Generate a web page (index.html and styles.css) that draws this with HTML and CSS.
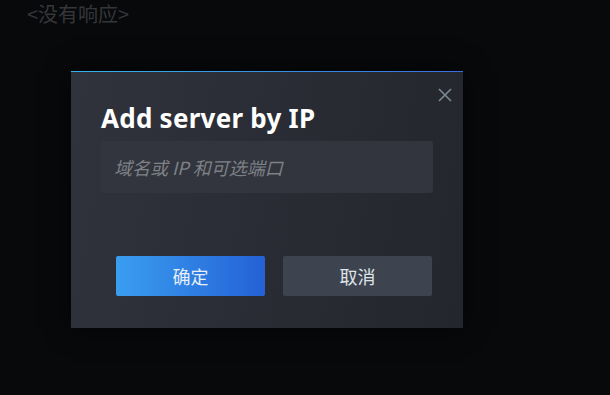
FILE: index.html
```html
<!DOCTYPE html>
<html lang="zh">
<head>
<meta charset="UTF-8" />
<title>Add server by IP</title>
<link rel="stylesheet" href="styles.css">
</head>
<body>
  <div class="status">&lt;没有响应&gt;</div>
  <div class="stage">
    <div class="dialog" role="dialog" aria-labelledby="dlgTitle">
      <button class="close" aria-label="关闭">
        <svg width="14" height="14" viewBox="0 0 14 14"><path d="M1 1 L13 13 M13 1 L1 13" stroke="#7d8a93" stroke-width="1.6" fill="none"/></svg>
      </button>
      <h1 id="dlgTitle">Add server by IP</h1>
      <input class="field" type="text" placeholder="域名或 IP 和可选端口" />
      <div class="btns">
        <button class="btn primary">确定</button>
        <button class="btn">取消</button>
      </div>
    </div>
  </div>
</body>
</html>
```

FILE: styles.css
```css
* { box-sizing: border-box; margin: 0; padding: 0; }
body { background: #08090b; width: 610px; height: 395px; overflow: hidden; font-family: 'Noto Sans', 'Noto Sans CJK SC', sans-serif; }
.status { position: absolute; left: 27px; top: 2px; font-size: 20px; line-height: 24px; color: #34363a; font-family: 'Noto Sans CJK SC', sans-serif; }
.stage { padding: 71px 0 0 71px; }
.dialog {
  position: relative;
  width: 392px;
  height: 257px;
  padding: 29px 30px 0 30px;
  border-top: 1px solid #3aa3e6;
  border-image: linear-gradient(90deg, #33b4ea, #3b6ee0) 1;
  border-left: 0; border-right: 0; border-bottom: 0;
  background: linear-gradient(100deg, #30333b 0%, #2a2d35 45%, #23262d 100%);
  box-shadow: 0 0 24px rgba(0,0,0,0.6);
}
.close { position: absolute; top: 16px; right: 11px; background: none; border: none; width: 14px; height: 14px; display: flex; }
h1 { font-size: 26px; font-weight: 700; color: #ffffff; line-height: 34px; letter-spacing: 0.25px; }
.field {
  display: block;
  margin-top: 6px;
  width: 332px;
  height: 52px;
  border: none;
  border-radius: 3px;
  background: #32353d;
  padding: 0 13px;
  font-family: 'Noto Sans CJK SC', sans-serif;
  font-size: 18px;
  color: #dfe3e8;
  outline: none;
}
.field::placeholder { color: #7e8187; font-style: italic; }
.btns { display: flex; gap: 18px; margin: 63px 0 0 15px; }
.btn {
  width: 149px;
  height: 40px;
  border: none;
  border-radius: 2px;
  background: #3d4450;
  color: #dfe3e8;
  font-family: 'Noto Sans CJK SC', sans-serif;
  font-size: 18px;
}
.btn.primary { background: linear-gradient(90deg, #3a9ef0, #2461d6); color: #e6eef8; }
```
